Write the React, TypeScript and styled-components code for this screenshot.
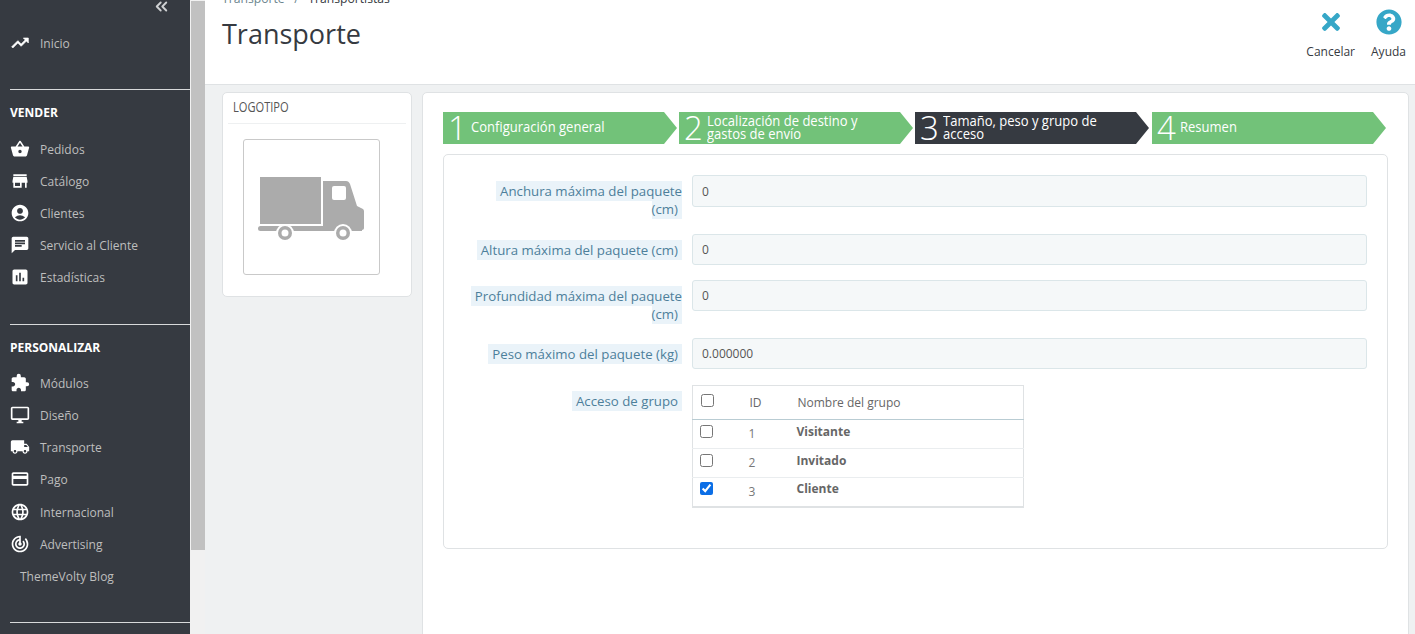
import React from "react";
import styled, { createGlobalStyle } from "styled-components";
import { MdShoppingBasket, MdStore, MdAccountCircle, MdChat, MdAssessment, MdExtension, MdOutlineDesktopWindows, MdLocalShipping, MdCreditCard, MdLanguage, MdTrackChanges } from "react-icons/md";
import { FaTimes, FaQuestionCircle } from "react-icons/fa";
import { FiChevronsLeft } from "react-icons/fi";

const Global = createGlobalStyle`
  html, body { margin: 0; padding: 0; background: #eff1f2; }
  * { box-sizing: border-box; }
  body { font-family: "Open Sans", "Liberation Sans", sans-serif; }
`;

const Page = styled.div`
  display: flex;
  width: 1415px;
  height: 634px;
  overflow: hidden;
`;

const Sidebar = styled.nav`
  width: 190px;
  flex: none;
  background: #363a41;
  display: flex;
  flex-direction: column;
  padding-left: 10px;
`;

const Collapse = styled.div`
  height: 12px;
  color: #cfd1d3;
  display: flex;
  justify-content: flex-end;
  align-items: center;
  padding-right: 19px;
  font-size: 19px;
  svg { stroke-width: 2.4; }
`;

const MenuRow = styled.div<{ $nudge?: number }>`
  display: flex;
  align-items: center;
  height: 32px;
  margin-top: ${(p) => p.$nudge ?? 0}px;
  color: #bebebe;
  font-size: 12px;
  white-space: nowrap;
  svg { color: #fff; width: 20px; height: 20px; flex: none; margin-right: 10px; }
`;

const PlainRow = styled(MenuRow)`
  padding-left: 10px;
`;

const Rule = styled.hr<{ $top: number }>`
  border: 0;
  height: 1px;
  background: #d8d9da;
  margin: ${(p) => p.$top}px 0 0;
`;

const SectionTitle = styled.div<{ $tail: number }>`
  color: #fff;
  font-size: 12px;
  font-weight: 700;
  height: 16px;
  line-height: 16px;
  margin: 15px 0 ${(p) => p.$tail}px;
`;

const Track = styled.div`
  width: 15px;
  flex: none;
  background: #f1f1f1;
`;

const Thumb = styled.div`
  height: 549px;
  margin-left: 1px;
  margin-top: 1px;
  background: #c1c1c1;
`;

const Main = styled.main`
  flex: 1;
  min-width: 0;
  display: flex;
  flex-direction: column;
`;

const Header = styled.header`
  height: 85px;
  flex: none;
  background: #fff;
  border-bottom: 1px solid #dfe2e4;
  display: flex;
  justify-content: space-between;
  padding: 0 9px 0 17px;
`;

const Crumb = styled.div`
  margin-top: -9px;
  font-size: 12.2px;
  line-height: 16px;
  color: #6c868e;
  span { margin-right: 9.5px; }
  b { font-weight: 400; color: #363a41; }
`;

const Title = styled.h1`
  margin: 9px 0 0;
  font-size: 27px;
  line-height: 36px;
  font-weight: 400;
  color: #363a41;
`;

const Actions = styled.div`
  display: flex;
  gap: 16px;
  padding-top: 9px;
`;

const Action = styled.div`
  display: flex;
  flex-direction: column;
  align-items: center;
  gap: 9px;
  font-size: 12px;
  line-height: 16px;
  color: #363a41;
  svg { color: #36a7c7; width: 26px; height: 26px; }
`;

const Body = styled.div`
  flex: 1;
  display: flex;
  gap: 10px;
  padding: 7px 7px 0 17px;
  align-items: flex-start;
`;

const Card = styled.aside`
  width: 190px;
  height: 205px;
  flex: none;
  background: #fff;
  border: 1px solid #dfe2e4;
  border-radius: 5px;
  padding: 0 5px;
`;

const CardTitle = styled.div`
  height: 31px;
  border-bottom: 1px solid #eef0f1;
  padding-left: 5px;
  font-size: 15px;
  line-height: 26px;
  color: #555;
  span { display: inline-block; transform: scaleX(0.74); transform-origin: left center; }
`;

const LogoFrame = styled.div`
  width: 137px;
  height: 136px;
  margin: 15px 0 0 15px;
  border: 1px solid #c9c9c9;
  border-radius: 3px;
  display: flex;
  align-items: center;
  justify-content: center;
  svg { display: block; margin-top: 3px; }
`;

const Panel = styled.section`
  flex: 1;
  height: 560px;
  background: #fff;
  border: 1px solid #dfe2e4;
  border-radius: 5px 5px 0 0;
  padding: 19px 20px 0;
`;

const Steps = styled.div`
  display: flex;
  gap: 2px;
  height: 32px;
`;

const Step = styled.div<{ $active?: boolean }>`
  width: 234px;
  height: 32px;
  flex: none;
  display: flex;
  align-items: center;
  padding-left: 5px;
  color: #fff;
  background: ${(p) => (p.$active ? "#363a41" : "#72c279")};
  clip-path: polygon(0 0, calc(100% - 13px) 0, 100% 50%, calc(100% - 13px) 100%, 0 100%);
  &:last-child { margin-left: 1px; }
`;

const StepNumber = styled.span`
  font-size: 33px;
  line-height: 32px;
  font-weight: 300;
  width: 22.5px;
  flex: none;
`;

const StepLabel = styled.span`
  font-size: 14px;
  line-height: 13px;
  width: 205px;
  flex: none;
  padding-bottom: 3px;
  transform: scaleX(0.93);
  transform-origin: left center;
  white-space: pre-line;
`;

const FieldSet = styled.div`
  margin-top: 10px;
  width: 945px;
  height: 395px;
  border: 1px solid #dfe2e4;
  border-radius: 5px;
  padding-top: 20px;
  display: flex;
  flex-direction: column;
`;

const Row = styled.div<{ $gap: number }>`
  display: flex;
  align-items: flex-start;
  margin-bottom: ${(p) => p.$gap}px;
`;

const LabelCol = styled.div`
  width: 238px;
  flex: none;
  text-align: right;
  font-size: 13.25px;
  line-height: 18px;
  color: #4d7f9b;
  padding: 7px 0 0 22px;
`;

const LabelText = styled.span`
  background: #eaf3f9;
  padding: 1px 4px;
`;

const Field = styled.input<{ $height: number }>`
  margin-left: 10px;
  width: 675px;
  height: ${(p) => p.$height}px;
  background: #f5f8f9;
  border: 1px solid #dbe6e9;
  border-radius: 3px;
  padding: 0 9px;
  font: 12px "Open Sans", sans-serif;
  color: #555;
  outline: none;
`;

const GroupTable = styled.table`
  margin-left: 10px;
  width: 332px;
  border-collapse: collapse;
  border: 1px solid #dfe2e4;
  border-bottom-width: 2px;
  font-size: 12px;
  color: #666;
  th { font-weight: 400; text-align: left; height: 34px; border-bottom: 1px solid #b9ccd3; padding: 0 0 0 1px; }
  td { height: 29px; border-bottom: 1px solid #eaedef; padding: 0; }
  tr:last-child td { border-bottom: 0; }
`;

const CheckCell = styled.td`
  width: 56px;
  padding: 0 0 6px 7px !important;
  input { margin: 0; width: 13px; height: 13px; display: block; accent-color: #0b6ee6; }
`;

const CheckHead = styled.th`
  width: 56px;
  padding: 0 !important;
  input { margin: 0 0 4px 8px; width: 13px; height: 13px; display: block; }
`;

const IdCell = styled.td`
  width: 48px;
  padding-bottom: 1px !important;
  color: #777;
`;

const NameCell = styled.td`
  font-weight: 700;
  color: #666;
  padding-bottom: 6px !important;
`;

const TrendIcon = () => (
  <svg viewBox="0 0 24 24" fill="currentColor" stroke="currentColor" strokeWidth="0.8">
    <path d="M16 6l2.29 2.29-4.88 4.88-4-4L2 16.59 3.41 18l6-6 4 4 6.3-6.29L22 12V6z" />
  </svg>
);

const Truck = () => (
  <svg width="108" height="64" viewBox="0 0 108 64" fill="#ababab">
    <rect x="2" y="0" width="61" height="47" />
    <path d="M65 4h23c2 0 3 1 4 3l7 22 6 3c1 1 1 2 1 3v16c0 1-1 2-2 2H65z" />
    <rect x="0" y="49" width="22" height="5" rx="2.5" />
    <rect x="20" y="49" width="84" height="5" />
    <rect x="74" y="9" width="14" height="14" rx="2" fill="#fff" />
    <circle cx="27" cy="56" r="9" fill="#fff" />
    <circle cx="27" cy="56" r="7" />
    <circle cx="27" cy="56" r="3.5" fill="#fff" />
    <circle cx="85" cy="56" r="9" fill="#fff" />
    <circle cx="85" cy="56" r="7" />
    <circle cx="85" cy="56" r="3.5" fill="#fff" />
  </svg>
);

const fields = [
  { label: "Anchura máxima del paquete (cm)", value: "0", gap: 16, height: 32 },
  { label: "Altura máxima del paquete (cm)", value: "0", gap: 15, height: 31 },
  { label: "Profundidad máxima del paquete (cm)", value: "0", gap: 15, height: 31 },
  { label: "Peso máximo del paquete (kg)", value: "0.000000", gap: 16, height: 31 },
];

const groups = [
  { id: 1, name: "Visitante", checked: false },
  { id: 2, name: "Invitado", checked: false },
  { id: 3, name: "Cliente", checked: true },
];

export default function App() {
  return (
    <Page>
      <Global />
      <Sidebar>
        <Collapse><FiChevronsLeft /></Collapse>
        <MenuRow $nudge={15}><TrendIcon />Inicio</MenuRow>
        <Rule $top={30} />
        <SectionTitle $tail={12}>VENDER</SectionTitle>
        <MenuRow><MdShoppingBasket />Pedidos</MenuRow>
        <MenuRow><MdStore />Catálogo</MenuRow>
        <MenuRow><MdAccountCircle />Clientes</MenuRow>
        <MenuRow><MdChat />Servicio al Cliente</MenuRow>
        <MenuRow><MdAssessment />Estadísticas</MenuRow>
        <Rule $top={31} />
        <SectionTitle $tail={11}>PERSONALIZAR</SectionTitle>
        <MenuRow><MdExtension />Módulos</MenuRow>
        <MenuRow><MdOutlineDesktopWindows />Diseño</MenuRow>
        <MenuRow><MdLocalShipping />Transporte</MenuRow>
        <MenuRow><MdCreditCard />Pago</MenuRow>
        <MenuRow $nudge={1}><MdLanguage />Internacional</MenuRow>
        <MenuRow><MdTrackChanges />Advertising</MenuRow>
        <PlainRow>ThemeVolty Blog</PlainRow>
        <Rule $top={30} />
      </Sidebar>
      <Track><Thumb /></Track>
      <Main>
        <Header>
          <div>
            <Crumb><span>Transporte</span><span>/</span><b>Transportistas</b></Crumb>
            <Title>Transporte</Title>
          </div>
          <Actions>
            <Action><FaTimes />Cancelar</Action>
            <Action><FaQuestionCircle />Ayuda</Action>
          </Actions>
        </Header>
        <Body>
          <Card>
            <CardTitle><span>LOGOTIPO</span></CardTitle>
            <LogoFrame><Truck /></LogoFrame>
          </Card>
          <Panel>
            <Steps>
              <Step><StepNumber>1</StepNumber><StepLabel>Configuración general</StepLabel></Step>
              <Step><StepNumber>2</StepNumber><StepLabel>{"Localización de destino y\ngastos de envío"}</StepLabel></Step>
              <Step $active><StepNumber>3</StepNumber><StepLabel>{"Tamaño, peso y grupo de\nacceso"}</StepLabel></Step>
              <Step><StepNumber>4</StepNumber><StepLabel>Resumen</StepLabel></Step>
            </Steps>
            <FieldSet>
              {fields.map((f) => (
                <Row key={f.label} $gap={f.gap}>
                  <LabelCol><LabelText>{f.label}</LabelText></LabelCol>
                  <Field $height={f.height} defaultValue={f.value} />
                </Row>
              ))}
              <Row $gap={0}>
                <LabelCol><LabelText>Acceso de grupo</LabelText></LabelCol>
                <GroupTable>
                  <thead>
                    <tr>
                      <CheckHead><input type="checkbox" /></CheckHead>
                      <th>ID</th>
                      <th>Nombre del grupo</th>
                    </tr>
                  </thead>
                  <tbody>
                    {groups.map((g) => (
                      <tr key={g.id}>
                        <CheckCell><input type="checkbox" defaultChecked={g.checked} /></CheckCell>
                        <IdCell>{g.id}</IdCell>
                        <NameCell>{g.name}</NameCell>
                      </tr>
                    ))}
                  </tbody>
                </GroupTable>
              </Row>
            </FieldSet>
          </Panel>
        </Body>
      </Main>
    </Page>
  );
}
